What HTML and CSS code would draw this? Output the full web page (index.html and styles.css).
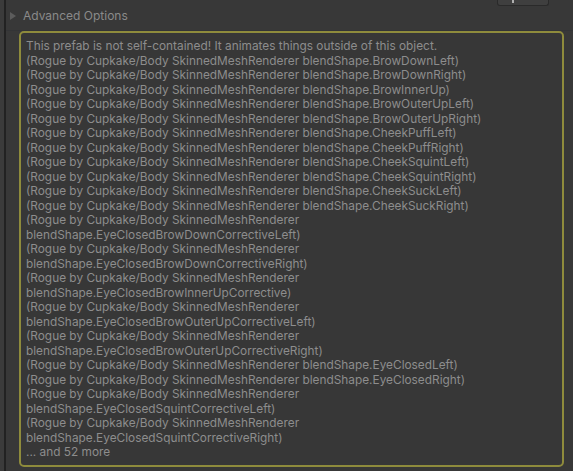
FILE: index.html
```html
<!DOCTYPE html>
<html lang="en">
<head>
    <meta charset="UTF-8">
    <meta name="viewport" content="width=device-width, initial-scale=1.0">
    <title>Advanced Options</title>
    <link rel="stylesheet" href="styles.css">
</head>
<body>
    <div class="gutter"></div>

    <div class="inspector">
        <div class="foldout">
            <span class="arrow"></span>
            <span class="foldout-label">Advanced Options</span>
            <div class="mini-button"><span class="dot"></span></div>
        </div>

        <div class="helpbox warning">
            <div>This prefab is not self-contained! It animates things outside of this object.</div>
            <div>(Rogue by Cupkake/Body SkinnedMeshRenderer blendShape.BrowDownLeft)</div>
            <div>(Rogue by Cupkake/Body SkinnedMeshRenderer blendShape.BrowDownRight)</div>
            <div>(Rogue by Cupkake/Body SkinnedMeshRenderer blendShape.BrowInnerUp)</div>
            <div>(Rogue by Cupkake/Body SkinnedMeshRenderer blendShape.BrowOuterUpLeft)</div>
            <div>(Rogue by Cupkake/Body SkinnedMeshRenderer blendShape.BrowOuterUpRight)</div>
            <div>(Rogue by Cupkake/Body SkinnedMeshRenderer blendShape.CheekPuffLeft)</div>
            <div>(Rogue by Cupkake/Body SkinnedMeshRenderer blendShape.CheekPuffRight)</div>
            <div>(Rogue by Cupkake/Body SkinnedMeshRenderer blendShape.CheekSquintLeft)</div>
            <div>(Rogue by Cupkake/Body SkinnedMeshRenderer blendShape.CheekSquintRight)</div>
            <div>(Rogue by Cupkake/Body SkinnedMeshRenderer blendShape.CheekSuckLeft)</div>
            <div>(Rogue by Cupkake/Body SkinnedMeshRenderer blendShape.CheekSuckRight)</div>
            <div>(Rogue by Cupkake/Body SkinnedMeshRenderer blendShape.EyeClosedBrowDownCorrectiveLeft)</div>
            <div>(Rogue by Cupkake/Body SkinnedMeshRenderer blendShape.EyeClosedBrowDownCorrectiveRight)</div>
            <div>(Rogue by Cupkake/Body SkinnedMeshRenderer blendShape.EyeClosedBrowInnerUpCorrective)</div>
            <div>(Rogue by Cupkake/Body SkinnedMeshRenderer blendShape.EyeClosedBrowOuterUpCorrectiveLeft)</div>
            <div>(Rogue by Cupkake/Body SkinnedMeshRenderer blendShape.EyeClosedBrowOuterUpCorrectiveRight)</div>
            <div>(Rogue by Cupkake/Body SkinnedMeshRenderer blendShape.EyeClosedLeft)</div>
            <div>(Rogue by Cupkake/Body SkinnedMeshRenderer blendShape.EyeClosedRight)</div>
            <div>(Rogue by Cupkake/Body SkinnedMeshRenderer blendShape.EyeClosedSquintCorrectiveLeft)</div>
            <div>(Rogue by Cupkake/Body SkinnedMeshRenderer blendShape.EyeClosedSquintCorrectiveRight)</div>
            <div>... and 52 more</div>
        </div>
    </div>
</body>
</html>
```

FILE: styles.css
```css
body {
    margin: 0;
    height: 471px;
    overflow: hidden;
    display: flex;
    background: #383838;
    font-family: Inter, "Noto Sans", sans-serif;
    font-size: 11.85px;
    color: #8d8d8d;
}
.gutter {
    width: 4px;
    background: #3b3b3b;
    border-right: 2px solid #222222;
}
.inspector {
    flex: 1;
    display: flex;
    flex-direction: column;
}
.foldout {
    height: 31px;
    display: flex;
    align-items: center;
    padding-left: 4px;
    border-bottom: 1px solid #333436;
    box-sizing: border-box;
}
.arrow {
    width: 0;
    height: 0;
    border-top: 4px solid transparent;
    border-bottom: 4px solid transparent;
    border-left: 6px solid #5c5c5c;
    margin-right: 7px;
    margin-top: 1px;
}
.foldout-label {
    font-size: 12px;
    color: #8a8a8a;
    margin-top: 1px;
}
.mini-button {
    align-self: flex-start;
    margin-left: auto;
    margin-right: 24px;
    width: 50px;
    height: 5px;
    background: #3f3f3f;
    border: 1px solid #2a2a2a;
    border-top: none;
    border-radius: 0 0 3px 3px;
    position: relative;
}
.mini-button .dot {
    position: absolute;
    left: 14px;
    top: 0;
    width: 2px;
    height: 3px;
    background: #b0b0b0;
}
.helpbox {
    margin: 0 9px 4px 13px;
    flex: 1;
    padding: 6px 20px 0 5px;
    border-radius: 5px;
    line-height: 14.5px;
}
.warning {
    border: 2px solid #8e8b3c;
    background: #373737;
}
```
